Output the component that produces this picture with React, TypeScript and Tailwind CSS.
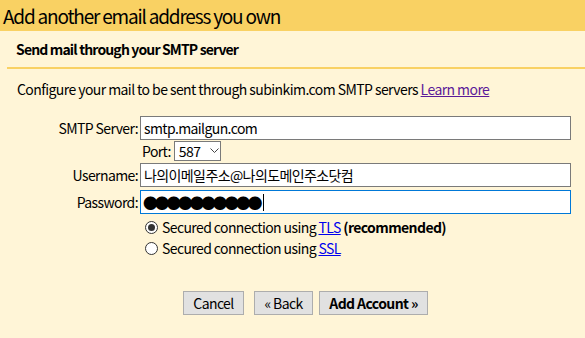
import React from 'react';

const font = { fontFamily: '"Noto Sans CJK KR", "Noto Sans", sans-serif' };

function Radio({ checked }: { checked?: boolean }) {
  return (
    <span className="flex h-[13px] w-[13px] shrink-0 items-center justify-center rounded-full border border-[#333] bg-white">
      {checked && <span className="h-[7px] w-[7px] rounded-full bg-[#333]" />}
    </span>
  );
}

export default function App() {
  return (
    <div
      className="h-[338px] w-[585px] overflow-hidden bg-[#fff5d7] text-[14px] tracking-[-0.6px] text-black"
      style={font}
    >
      <div className="h-[31px] bg-[#f9d163] pl-[3px] text-[19px] leading-[31px] tracking-[-1.2px]">
        Add another email address you own
      </div>
      <div className="flex h-[36px] items-center pl-[16px] font-bold tracking-[-0.85px]">
        Send mail through your SMTP server
      </div>
      <div className="ml-[7px] h-[2px] bg-[#f9d163]" />

      <div className="mt-[10px] pl-[17px] leading-[20px] tracking-[-0.57px]">
        Configure your mail to be sent through subinkim.com SMTP servers{' '}
        <a className="text-[#5b1a99] underline">Learn more</a>
      </div>

      <div className="mt-[17px] flex flex-col">
        <div className="flex h-[24px] items-center">
          <div className="w-[138px] text-right">SMTP Server:</div>
          <div className="ml-[2px] flex h-[24px] w-[431px] items-center border border-[#7a7a7a] bg-white pl-[3px]">
            smtp.mailgun.com
          </div>
        </div>
        <div className="mt-[1px] flex h-[20px] items-center">
          <div className="ml-[142px]">Port:</div>
          <div className="ml-[3px] flex h-[20px] w-[47px] items-center border border-[#7a7a7a] bg-white pl-[4px]">
            587
            <svg width="9" height="6" viewBox="0 0 9 6" className="ml-[10px]">
              <path d="M0.5 0.5 L4.5 4.5 L8.5 0.5" fill="none" stroke="#444" strokeWidth="1" />
            </svg>
          </div>
        </div>
        <div className="mt-[2px] flex h-[24px] items-center">
          <div className="w-[138px] text-right">Username:</div>
          <div className="ml-[2px] flex h-[24px] w-[431px] items-center border border-[#7a7a7a] bg-white pl-[3px]">
            나의이메일주소@나의도메인주소닷컴
          </div>
        </div>
        <div className="mt-[3px] flex h-[24px] items-center">
          <div className="w-[138px] text-right">Password:</div>
          <div className="ml-[2px] flex h-[24px] w-[431px] items-center border border-[#0078d7] bg-white pl-[2px]">
            <span className="text-[15px] leading-none tracking-[-3.4px]">●●●●●●●●●●</span>
            <span className="ml-[4px] h-[17px] w-[1px] bg-black" />
          </div>
        </div>

        <div className="mt-[3px] flex h-[20px] items-center pl-[145px]">
          <Radio checked />
          <span className="ml-[4px]">
            Secured connection using <a className="text-[#0000ee] underline">TLS</a>{' '}
            <b>(recommended)</b>
          </span>
        </div>
        <div className="mt-[1px] flex h-[20px] items-center pl-[145px]">
          <Radio />
          <span className="ml-[4px]">
            Secured connection using <a className="text-[#0000ee] underline">SSL</a>
          </span>
        </div>

        <div className="mt-[33px] flex pl-[183px]">
          <button className="h-[24px] w-[61px] border border-[#adadad] bg-[#e1e1e1]">Cancel</button>
          <button className="ml-[10px] h-[24px] w-[59px] border border-[#adadad] bg-[#e1e1e1]">« Back</button>
          <button className="ml-[6px] h-[24px] w-[109px] border border-[#adadad] bg-[#e1e1e1] font-bold">
            Add Account »
          </button>
        </div>
      </div>
    </div>
  );
}
